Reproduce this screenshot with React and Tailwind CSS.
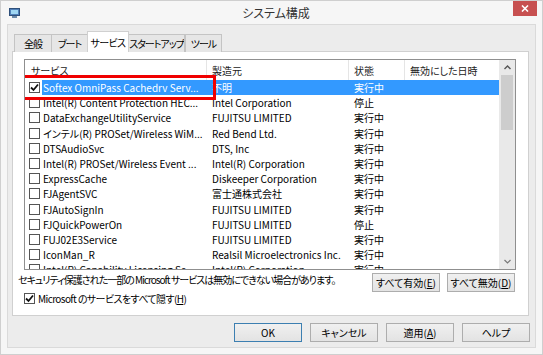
import React from 'react';

const FONT = { fontFamily: '"Noto Sans CJK JP", "Noto Sans", sans-serif' };

const services = [
  { name: 'Softex OmniPass Cachedrv Serv...', maker: '不明', status: '実行中', checked: true, selected: true },
  { name: 'Intel(R) Content Protection HEC...', maker: 'Intel Corporation', status: '停止' },
  { name: 'DataExchangeUtilityService', maker: 'FUJITSU LIMITED', status: '実行中' },
  { name: 'インテル(R) PROSet/Wireless WiM...', maker: 'Red Bend Ltd.', status: '実行中' },
  { name: 'DTSAudioSvc', maker: 'DTS, Inc', status: '実行中' },
  { name: 'Intel(R) PROSet/Wireless Event ...', maker: 'Intel(R) Corporation', status: '実行中' },
  { name: 'ExpressCache', maker: 'Diskeeper Corporation', status: '実行中' },
  { name: 'FJAgentSVC', maker: '富士通株式会社', status: '実行中' },
  { name: 'FJAutoSignIn', maker: 'FUJITSU LIMITED', status: '実行中' },
  { name: 'FJQuickPowerOn', maker: 'FUJITSU LIMITED', status: '停止' },
  { name: 'FUJ02E3Service', maker: 'FUJITSU LIMITED', status: '実行中' },
  { name: 'IconMan_R', maker: 'Realsil Microelectronics Inc.', status: '実行中' },
  { name: 'Intel(R) Capability Licensing Se...', maker: 'Intel(R) Corporation', status: '実行中' },
];

function Checkbox({ checked }) {
  return (
    <div className="w-[11px] h-[11px] border border-[#555] bg-white flex items-center justify-center shrink-0">
      {checked && (
        <svg width="9" height="9" viewBox="0 0 9 9">
          <path d="M1 4.5 L3.5 7 L8 1.5" fill="none" stroke="#111" strokeWidth="1.8" />
        </svg>
      )}
    </div>
  );
}

function Btn({ children, primary }) {
  return (
    <button
      className={`h-[19px] w-[68px] text-[10px] whitespace-nowrap text-black flex items-center justify-center bg-gradient-to-b from-[#f0f0f0] to-[#e3e3e3] border ${primary ? 'border-[#3c7fb1]' : 'border-[#adadad]'}`}
    >
      {children}
    </button>
  );
}

const tabs = [
  { label: '全般', w: 'w-[38px]' },
  { label: 'ブート', w: 'w-[37px]' },
  { label: 'サービス', w: 'w-[42px]' },
  { label: 'スタートアップ', w: 'w-[57px]' },
  { label: 'ツール', w: 'w-[37px]' },
];

export default function App() {
  return (
    <div
      style={FONT}
      className="w-[543px] h-[355px] bg-[#f6f6f6] border border-[#cfcfcf] flex flex-col overflow-hidden [font-feature-settings:'palt']"
    >
      {/* Title bar */}
      <div className="relative h-[23px] shrink-0 flex items-center">
        <svg className="ml-[8px]" width="11" height="10" viewBox="0 0 11 10">
          <rect x="0.5" y="0.5" width="10" height="7" fill="#4f7fb8" stroke="#2e4f7a" />
          <rect x="2" y="2" width="7" height="4" fill="#9fd6f2" />
          <rect x="3" y="8" width="5" height="2" fill="#6d8aa8" />
        </svg>
        <div className="flex-1 text-center text-[12px] text-[#333] pr-[10px]">システム構成</div>
        <div className="absolute right-[5px] top-0 w-[24px] h-[15px] bg-[#c75050] flex items-center justify-center">
          <svg width="8" height="7" viewBox="0 0 8 7">
            <path d="M1 0.5 L7 6.5 M7 0.5 L1 6.5" stroke="white" strokeWidth="1.6" />
          </svg>
        </div>
      </div>

      {/* Client area */}
      <div className="ml-[6px] mr-[6px] h-[324px] bg-[#ececec] border border-[#dadada] flex flex-col pl-[4px] pr-[6px] pt-[6px]">
        {/* Tabs */}
        <div className="flex items-end h-[20px] pl-[2px] relative z-10">
          {tabs.map((t, i) =>
            i === 2 ? (
              <div key={t.label} className={`${t.w} h-[21px] -mb-px -mx-[1px] bg-white border border-[#d0d0d0] border-b-0 text-[10px] whitespace-nowrap tracking-[-0.6px] flex items-center justify-center relative z-10`}>
                {t.label}
              </div>
            ) : (
              <div
                key={t.label}
                className={`${t.w} h-[18px] -mb-px bg-[#e6e6e6] border border-[#c4c4c4] border-b-0 text-[10px] whitespace-nowrap tracking-[-1px] flex items-center justify-center overflow-hidden ${i === 1 ? '-ml-px' : ''}`}
              >
                {t.label}
              </div>
            )
          )}
        </div>

        {/* Panel */}
        <div className="h-[265px] bg-white border border-[#d0d0d0] flex flex-col pl-[11px] pr-[12px] pt-[7px]">
          {/* List view */}
          <div className="relative h-[211px] border border-[#8f8f8f] flex overflow-hidden">
            <div className="flex-1 flex flex-col overflow-hidden">
              <div className="h-[20px] shrink-0 flex items-center text-[10px] text-[#222]">
                <div className="w-[182px] h-full pl-[6px] flex items-center border-r border-[#e5e5e5]">サービス</div>
                <div className="w-[142px] h-full pl-[5px] flex items-center border-r border-[#e5e5e5]">製造元</div>
                <div className="w-[56px] h-full pl-[5px] flex items-center border-r border-[#e5e5e5]">状態</div>
                <div className="flex-1 h-full pl-[5px] flex items-center">無効にした日時</div>
              </div>
              {services.map((s) => (
                <div key={s.name} className="h-[15.2px] shrink-0 flex items-center text-[10px] whitespace-nowrap">
                  <div className="w-[17px] h-full pl-[4px] flex items-center shrink-0">
                    <Checkbox checked={s.checked} />
                  </div>
                  <div className={`flex-1 h-full flex items-center ${s.selected ? 'bg-[#3399ff] text-white' : 'text-black'}`}>
                    <div className="w-[165px] pl-[1px] overflow-hidden shrink-0">{s.name}</div>
                    <div className="w-[142px] pl-[5px] overflow-hidden shrink-0">{s.maker}</div>
                    <div className="w-[56px] pl-[5px] shrink-0">{s.status}</div>
                    <div className="flex-1" />
                  </div>
                </div>
              ))}
            </div>
            {/* Scrollbar */}
            <div className="w-[16px] shrink-0 bg-[#e9e9e9] flex flex-col items-center">
              <div className="h-[15px] flex items-center justify-center">
                <svg width="7" height="5" viewBox="0 0 7 5">
                  <path d="M0.5 4 L3.5 1 L6.5 4" fill="none" stroke="#555" strokeWidth="1.4" />
                </svg>
              </div>
              <div className="w-[12px] h-[55px] bg-[#cdcdcd]" />
              <div className="flex-1" />
              <div className="h-[15px] flex items-center justify-center">
                <svg width="7" height="5" viewBox="0 0 7 5">
                  <path d="M0.5 1 L3.5 4 L6.5 1" fill="none" stroke="#777" strokeWidth="1.2" />
                </svg>
              </div>
            </div>
            {/* annotation */}
            <div className="absolute left-[-6px] top-[15px] w-[197px] h-[25px] border-[3px] border-[#f00000]" />
          </div>

          {/* notice + buttons */}
          <div className="flex items-start mt-[3px] text-[10px]">
            <div className="flex-1 -ml-[6px] mt-[1px] leading-[12px] whitespace-nowrap tracking-[-1px]">セキュリティ保護された一部の Microsoft サービスは無効にできない場合があります。</div>
            <div className="flex gap-[7px] mr-[1px]">
              <Btn>すべて有効(<span className="underline">E</span>)</Btn>
              <Btn>すべて無効(<span className="underline">D</span>)</Btn>
            </div>
          </div>
          <div className="flex items-center gap-[3px] -mt-[1px] text-[10px]">
            <Checkbox checked />
            <span className="tracking-[-0.6px]">Microsoft のサービスをすべて隠す(<span className="underline">H</span>)</span>
          </div>
        </div>

        {/* dialog buttons */}
        <div className="flex justify-end gap-[8px] mt-[7px] -mr-[1px]">
          <Btn primary>OK</Btn>
          <Btn>キャンセル</Btn>
          <Btn>適用(<span className="underline">A</span>)</Btn>
          <Btn>ヘルプ</Btn>
        </div>
      </div>
    </div>
  );
}
